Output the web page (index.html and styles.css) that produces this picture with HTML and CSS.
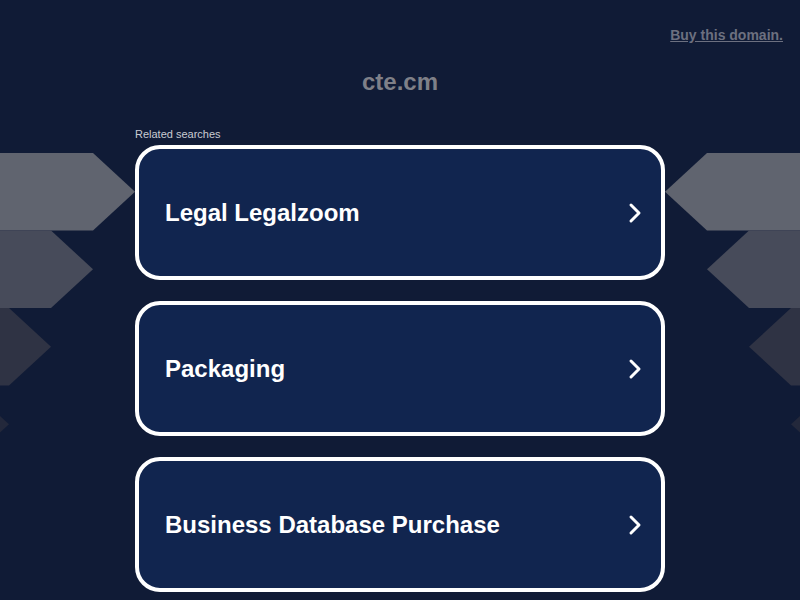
FILE: index.html
```html
<!DOCTYPE html>
<html lang="en">
<head>
<meta charset="utf-8">
<title>cte.cm</title>
<link rel="stylesheet" href="styles.css">
</head>
<body>
<header class="topbar">
  <a class="buy" href="#">Buy this domain.</a>
</header>
<h1 class="title">cte.cm</h1>
<main class="layout">
  <aside class="side side-left">
    <svg class="deco" width="135" height="310" viewBox="0 0 135 310">
      <polygon fill="#60646f" points="0,0 93,0 135,38.75 93,77.5 0,77.5"/>
      <polygon fill="#474b5a" points="0,77.5 51,77.5 93,116.25 51,155 0,155"/>
      <polygon fill="#2f3344" points="0,155 9,155 51,193.75 9,232.5 0,232.5"/>
      <polygon fill="#23283b" points="-60,232.5 -33,232.5 9,271.25 -33,310 -60,310"/>
    </svg>
  </aside>
  <section class="center">
    <div class="label">Related searches</div>
    <a class="card" href="#"><span class="card-text">Legal Legalzoom</span><svg class="chev" width="14" height="22" viewBox="0 0 14 22"><path d="M3 3 L11 11 L3 19" fill="none" stroke="#fff" stroke-width="3" stroke-linecap="round" stroke-linejoin="round"/></svg></a>
    <a class="card" href="#"><span class="card-text">Packaging</span><svg class="chev" width="14" height="22" viewBox="0 0 14 22"><path d="M3 3 L11 11 L3 19" fill="none" stroke="#fff" stroke-width="3" stroke-linecap="round" stroke-linejoin="round"/></svg></a>
    <a class="card" href="#"><span class="card-text">Business Database Purchase</span><svg class="chev" width="14" height="22" viewBox="0 0 14 22"><path d="M3 3 L11 11 L3 19" fill="none" stroke="#fff" stroke-width="3" stroke-linecap="round" stroke-linejoin="round"/></svg></a>
  </section>
  <aside class="side side-right">
    <svg class="deco" width="135" height="310" viewBox="0 0 135 310">
      <polygon fill="#60646f" points="135,0 42,0 0,38.75 42,77.5 135,77.5"/>
      <polygon fill="#474b5a" points="135,77.5 84,77.5 42,116.25 84,155 135,155"/>
      <polygon fill="#2f3344" points="135,155 126,155 84,193.75 126,232.5 135,232.5"/>
      <polygon fill="#23283b" points="195,232.5 168,232.5 126,271.25 168,310 195,310"/>
    </svg>
  </aside>
</main>
</body>
</html>
```

FILE: styles.css
```css
html, body {
  margin: 0;
  padding: 0;
}
body {
  background: #101b36;
  font-family: "Liberation Sans", Arial, sans-serif;
  width: 800px;
  height: 600px;
  overflow: hidden;
}
.topbar {
  display: flex;
  justify-content: flex-end;
  padding: 27px 17px 0;
  height: 16px;
}
.buy {
  font-size: 14px;
  line-height: 16px;
  font-weight: bold;
  color: #6c7080;
  text-decoration: underline;
}
.title {
  margin: 25px 0 0;
  text-align: center;
  font-size: 24px;
  line-height: 28px;
  font-weight: bold;
  color: #7f8088;
}
.layout {
  display: grid;
  grid-template-columns: 135px 530px 135px;
  margin-top: 32px;
}
.side {
  padding-top: 25px;
}
.deco {
  display: block;
}
.center {
  display: flex;
  flex-direction: column;
}
.label {
  font-size: 11px;
  line-height: 13px;
  color: #c9cbd2;
  margin-bottom: 4px;
}
.card {
  box-sizing: border-box;
  height: 135px;
  margin-bottom: 21px;
  border: 4px solid #ffffff;
  border-radius: 25px;
  background: #11254f;
  display: flex;
  align-items: center;
  justify-content: space-between;
  padding: 0 19px 0 26px;
  text-decoration: none;
}
.card-text {
  color: #ffffff;
  font-size: 24px;
  font-weight: bold;
  line-height: 28px;
}
.chev {
  display: block;
}
```
